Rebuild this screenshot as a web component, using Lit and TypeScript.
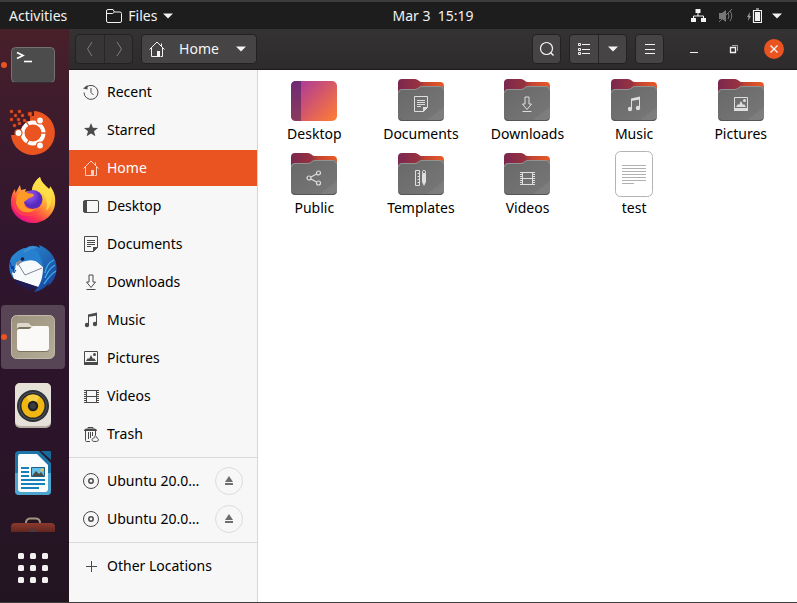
import { LitElement, html, svg, css } from "lit";
import { customElement, property } from "lit/decorators.js";
import { classMap } from "lit/directives/class-map.js";

/* Symbolic 16x16 glyphs, drawn in the current text colour */
const glyphs: Record<string, unknown> = {
  recent: svg`<g fill="none" stroke="currentColor"><path d="M3.2 3.3A7 7 0 1 1 1 8.5" /><path d="M8 4v4.500l2.500 2.500" /></g><path d="M0 4.500 4.500 1v4.500z" fill="currentColor" />`,
  star: svg`<path fill="currentColor" d="m8 1 1.900 4.800 5.100.3-4 3.200 1.400 5L8 11.500l-4.400 2.800 1.400-5-4-3.200 5.100-.3z" />`,
  home: svg`<path fill="none" stroke="currentColor" d="M.5 8.500 8 1l7.500 7.500M2.500 7v8.500h5.500M13.500 7v8.500h-2M12.500 5V2.500" /><path fill="currentColor" d="M8 10h3v6H8z" />`,
  desktop: svg`<rect x=".5" y="2.500" width="15" height="12" rx="1.500" fill="none" stroke="currentColor" /><path fill="currentColor" d="M1 3h3v11H1z" />`,
  documents: svg`<path fill="none" stroke="currentColor" d="M1.500.5h13v11l-4 4h-9z" /><path stroke="currentColor" d="M4 4.500h8M4 6.500h8M4 8.500h8M4 10.500h4" /><path fill="currentColor" d="M10 16v-5h5z" />`,
  downloads: svg`<path fill="none" stroke="currentColor" d="M6 1h4v7h2.500L8 13.500 3.500 8H6zM3.500 15.500h9" />`,
  music: svg`<path fill="none" stroke="currentColor" d="M5.500 13V3.500l8-1.500v9.500" /><path fill="currentColor" d="M5 2.500 14 .5v3L5 5z" /><circle cx="4" cy="13" r="2.200" fill="currentColor" /><circle cx="12" cy="12" r="2.200" fill="currentColor" />`,
  pictures: svg`<path fill="none" stroke="currentColor" d="M1.500 1.500h13v12h-13z" /><path fill="currentColor" d="M1 12h14v3H1zM3 11l2-3 1 1 2-4 2 4 1-1 2 3z" /><circle cx="11.500" cy="4.500" r="1.500" fill="currentColor" />`,
  videos: svg`<path fill="none" stroke="currentColor" d="M3.500 2.500h10v12h-10zM3 8.500h11M1 2.500h15M1 14.500h15" /><path stroke="currentColor" stroke-width="2" stroke-dasharray="1 1" d="M2 2v13M15 2v13" />`,
  trash: svg`<path fill="none" stroke="currentColor" d="M2.500 5v9.500q0 1 1 1H7M12.500 5v4M5.500 6v7M7.500 6v6M9.500 6v4M5 2.500v-1h5v1" /><path fill="currentColor" d="M1 5q0-2.500 3-2.500h7q3 0 3 2.500z" /><path fill="none" stroke="currentColor" d="M12 9.500c-1 1 .5 1.500-.5 2.300-1.500.2-2.500.8-2.500 2s1 1.700 3 1.700 3.500-.5 3.500-1.700-1-1.500-1.700-1.800c.3-1-.6-1.900-1.800-2.500z" />`,
  disc: svg`<g fill="none" stroke="currentColor"><circle cx="8" cy="8" r="7.500" /><circle cx="8" cy="8" r="2.200" stroke-width="1.500" /></g>`,
  plus: svg`<path stroke="currentColor" d="M8.500 3v11M3 8.500h11" />`,
  eject: svg`<path fill="currentColor" d="m8 3 4 6H4zM4 10h8v2H4z" />`,
  share: svg`<g fill="none" stroke="currentColor" stroke-width="1.200"><circle cx="3" cy="8" r="2" /><circle cx="12.500" cy="3" r="2" /><circle cx="12.500" cy="13" r="2" /><path d="m5 7 5.500-3M5 9l5.500 3" /></g>`,
  templates: svg`<path fill="none" stroke="currentColor" d="M2.500.5h4v15h-4zM4.500 3.500h2M4.500 6.500h2M4.500 9.500h2M4.500 12.500h2" /><path fill="currentColor" d="M9 4h4v8l-2 4-2-4z" /><path fill="none" stroke="currentColor" d="M9.500 3.500v-2q0-1 1.500-1t1.500 1v2z" />`,
  folder: svg`<path fill="none" stroke="currentColor" d="M.5 13V3q0-1.500 1.500-1.500h5L8.500 4h5.500q1.500 0 1.500 1.500V13q0 1.500-1.500 1.500H2Q.5 14.500.5 13zM.5 5.500h6L8.500 4" />`,
  caret: svg`<path fill="currentColor" d="M3 5.500h10l-5 5z" />`,
  back: svg`<path fill="none" stroke="currentColor" d="m10 1-4.500 7 4.500 7" />`,
  forward: svg`<path fill="none" stroke="currentColor" d="m6 1 4.500 7L6 15" />`,
  search: svg`<circle cx="7.500" cy="7.500" r="6" fill="none" stroke="currentColor" stroke-width="1.200" /><path stroke="currentColor" stroke-width="1.400" d="m11.500 11.500 3 3" />`,
  list: svg`<path stroke="currentColor" d="M6 3.500h8M6 8.500h8M6 12.500h8" /><path fill="none" stroke="currentColor" d="M2.500 2.500h2v2h-2zM2.500 7.500h2v2h-2zM2.500 11.500h2v2h-2z" />`,
  menu: svg`<path stroke="currentColor" d="M3 3.500h10M3 8.500h10M3 12.500h10" />`,
  minimise: svg`<path stroke="currentColor" d="M4 11.500h8" />`,
  restore: svg`<path fill="none" stroke="currentColor" stroke-width="1.300" d="M4.500 6.500h5v5h-5z" /><path fill="none" stroke="currentColor" opacity=".6" d="M6 4.500h5.500V10" />`,
  close: svg`<path stroke="currentColor" stroke-width="1.400" d="m4.500 4.500 7 7m0-7-7 7" />`,
  network: svg`<path fill="currentColor" d="M5.500 1h5v4h-5zM1 10h5v4H1zM11 10h5v4h-5z" /><path fill="none" stroke="currentColor" d="M8 5v3M3.500 10V8h10v2" />`,
  muted: svg`<path fill="currentColor" d="M1 5h3l4-3v12l-4-3H1z" /><path fill="none" stroke="currentColor" d="M10 5q2 3 0 6M12 3q3.500 5 0 10M1 14 14 1" />`,
  battery: svg`<path fill="currentColor" opacity=".6" d="M4 4 1 9h1.500L2 13l3-5H3.500z" /><path fill="none" stroke="currentColor" stroke-width="1.200" d="M7.500 2.500h8v12h-8zM10 1h3" /><path fill="currentColor" d="M9 4h5v9H9z" />`,
};

@customElement("sym-icon")
class SymIcon extends LitElement {
  @property() name = "";
  static styles = css`
    :host { display: block; flex: none; width: 16px; height: 16px; }
    svg { display: block; }
  `;
  render() {
    return html`<svg width="16" height="16" viewBox="0 0 16 16" aria-hidden="true">${glyphs[this.name]}</svg>`;
  }
}

/* Full-colour 48x48 file icons */
@customElement("file-icon")
class FileIcon extends LitElement {
  @property() kind = "";
  static styles = css`
    :host { display: block; width: 48px; height: 48px; }
    svg { display: block; }
    .emblem { color: #dedede; }
  `;
  private desktop() {
    return svg`
      <defs><linearGradient id="d" x2="1" y2=".8"><stop offset=".1" stop-color="#a93c9a" /><stop offset=".5" stop-color="#cf5370" /><stop offset="1" stop-color="#f9783c" /></linearGradient>
      <linearGradient id="s" x2="0" y2="1"><stop stop-color="#6f2a74" /><stop offset="1" stop-color="#8a3c5c" /></linearGradient></defs>
      <rect x="1" y="5" width="46" height="40" rx="5" fill="url(#d)" />
      <path d="M11 5H6q-5 0-5 5v30q0 5 5 5h5z" fill="url(#s)" />`;
  }
  private page() {
    return svg`
      <rect x="5.500" y="1.500" width="37" height="45" rx="5" fill="#fff" stroke="#b4b4b4" />
      <path stroke="#b0b0b0" d="M12 15.500h24M12 18.500h24M12 21.500h24M12 24.500h24M12 27.500h24M12 30.500h24M12 33.500h12" />`;
  }
  private folder() {
    return svg`
      <defs><linearGradient id="b" x2="1"><stop stop-color="#7a2750" /><stop offset=".45" stop-color="#97323f" /><stop offset=".6" stop-color="#c34432" /><stop offset="1" stop-color="#ec5a25" /></linearGradient>
      <linearGradient id="f" x2="1" y2="1"><stop stop-color="#686868" /><stop offset=".8" stop-color="#757575" /><stop offset=".8" stop-color="#7c7c7c" /><stop offset="1" stop-color="#808080" /></linearGradient></defs>
      <path fill="url(#b)" d="M1 20V7q0-4 4-4h13q2 0 3.500 1.500T25 6h18q4 0 4 4v10z" />
      <path fill="url(#f)" d="M1 17q0-4 4-4h13q2 0 3.500-1.500T25 10h18q4 0 4 4v27q0 4-4 4H5q-4 0-4-4z" />
      <path fill="none" stroke="#929292" d="M1.500 17q0-3.500 3.500-3.500h13q2 0 3.500-1.500T25 10.500h18q3.500 0 3.500 3.500" />
      <path fill="none" stroke="#555" d="M2 42.500q1 2 3 2h38q2 0 3-2" />
      <g class="emblem" transform="translate(16 20)">${glyphs[this.kind]}</g>`;
  }
  render() {
    const art = this.kind === "desktop" ? this.desktop() : this.kind === "text" ? this.page() : this.folder();
    return html`<svg width="48" height="48" viewBox="0 0 48 48" aria-hidden="true">${art}</svg>`;
  }
}

/* Launcher artwork, 48x48 */
const apps: Record<string, unknown> = {
  Terminal: svg`
    <rect x="2.500" y="6.500" width="43" height="35" rx="4" fill="#4b4c4b" stroke="#737373" />
    <path d="M4 41.500h40" stroke="#333" />
    <path d="m8 11.500 6 3-6 3" fill="none" stroke="#fff" stroke-width="1.700" /><path d="M15 20.500h8" stroke="#fff" stroke-width="1.600" />`,
  "Install Ubuntu": svg`
    <path fill="#e95420" d="M25 2a22 22 0 1 1-23 24h6v-4h5v-5h5v-5h3V7h4z" />
    <g fill="#e95420" stroke="#8e2a12" stroke-width=".6"><path d="M1 1h3v3H1zM9 1h3v3H9zM5 5h3v3H5zM12 5h3v3h-3zM1 9h3v3H1zM8 9h3v3H8zM19 3h4v4h-4zM4 15h3v3H4zM9 13h3v3H9zM14 10h3v3h-3z" /></g>
    <circle cx="24" cy="24" r="10.500" fill="none" stroke="#fff" stroke-width="4" />
    <path stroke="#e95420" stroke-width="1.400" d="M24 24H38M24 24 17 12M24 24 17 36" />
    <circle cx="24" cy="24" r="8" fill="#e95420" />
    <g fill="#fff" stroke="#e95420" stroke-width="1.200"><circle cx="9.500" cy="24" r="3.500" /><circle cx="31" cy="11.500" r="3.500" /><circle cx="31" cy="36.500" r="3.500" /></g>`,
  Firefox: svg`
    <defs><linearGradient id="ff" x1=".8" y1=".1" x2=".25" y2=".95"><stop stop-color="#fff04d" /><stop offset=".35" stop-color="#ffbd3a" /><stop offset=".6" stop-color="#ff7139" /><stop offset=".8" stop-color="#ff3152" /><stop offset="1" stop-color="#e3128b" /></linearGradient>
    <radialGradient id="fg" cx=".35" cy=".3"><stop stop-color="#a44cf0" /><stop offset=".6" stop-color="#7542d8" /><stop offset="1" stop-color="#592abf" /></radialGradient></defs>
    <path fill="url(#ff)" d="M31 0c1 5 5 8 9 12 1-1 1-2 1-3 4 5 6 11 5 18-1 11-11 19-22 19S3 38 2 28c-.5-6 1-12 4-16l.5 4L11 8l1 5 5-1-1 3c2-1 4-1 7-1 0-6 4-11 8-14z" />
    <path fill="#ffe14a" d="M31 0c1 5 5 8 9 12 4 6 3 17-3 22 2-7 1-13-3-17-3-2-6-3-11-3 0-6 4-11 8-14z" opacity=".8" />
    <circle cx="24" cy="22.500" r="9.500" fill="url(#fg)" />
    <path fill="#ff9b25" d="M8 18c4-4 8-4 11-2 2 1 5 0 6 2-1 3-5 2-6 4l-4 3c0 6 6 9 12 6-6 8-19 5-20-6z" />
    <path fill="#ff4a48" opacity=".65" d="M5 20c1 14 13 22 27 13-6 9-25 9-28-5z" />`,
  Thunderbird: svg`
    <defs><linearGradient id="tb" x2="1" y2="1"><stop stop-color="#2e91dd" /><stop offset=".5" stop-color="#216bb8" /><stop offset="1" stop-color="#173c99" /></linearGradient></defs>
    <path fill="url(#tb)" d="M17 3c4-3 10-3 14 0l-1-3c8 3 13 8 16 15 4 10 0 21-7 26l1-3c-4 5-9 8-15 9l4-5-24-8C0 29-1 20 2 13c3-5 8-8 13-10z" />
    <path fill="#f8f9fb" d="M7 18c4-4 14-5 20-2l7 6c0 7-1 14-5 20L5 34l-2-6 3-3z" />
    <path fill="#1f1b52" d="m5 34 24 8-4 3-2-2-2 3-4-4-2 2-2-4-3 1z" />
    <path fill="none" stroke="#7d8699" d="M8 17 16 30l17-7" />
    <path fill="#2780cf" d="M8 19C7 9 15 3 23 3c7 3 9 9 11 19-4-6-10-8-17-6-3 1-6 1-9 3z" />
    <path fill="#3d8fd4" d="M14 8c3-6 10-8 14-5-5 0-9 3-14 5z" />
    <circle cx="13.500" cy="14" r="1.800" fill="#1d1b33" /><path fill="#8b8f96" d="m7 18 4-3 2 2-5 4z" />
    <path fill="none" stroke="#3db0e6" stroke-width="1.300" d="M45 15c-5 2-8 7-9 13M46 20c-5 3-8 8-10 13M47 26c-5 3-8 7-12 13" />
    <path fill="none" stroke="#14359b" d="m1 17 2 7 1-3 1 7 2-3" />`,
  Files: svg`
    <defs><linearGradient id="fb" x2="1" y2="1"><stop stop-color="#9c927d" /><stop offset="1" stop-color="#b4ac98" /></linearGradient></defs>
    <rect x="2.500" y="2.500" width="43" height="43" rx="5" fill="url(#fb)" stroke="#c0b9a8" />
    <path fill="#ded9cc" d="M8 18v-6q0-2 2-2h9q1 0 2 1.500t3 1.500v5z" />
    <rect x="8" y="14" width="32" height="25" rx="3" fill="#7b725f" />
    <path fill="#faf9f7" d="M8 18q0-2 2-2h9q2 0 3-1.500t3-1.500h13q2 0 2 2v20q0 3-3 3H11q-3 0-3-3z" />`,
  Rhythmbox: svg`
    <rect x="6" y="2" width="36" height="45" rx="5" fill="#b3ada4" /><rect x="6" y="2" width="36" height="43" rx="5" fill="#e5e0d8" />
    <circle cx="24" cy="25" r="16" fill="#2d3138" /><circle cx="24" cy="25" r="14" fill="#4f535a" /><circle cx="24" cy="25" r="13" fill="#25272b" />
    <circle cx="24" cy="25" r="11.500" fill="#f0b713" /><path fill="#f7cf45" d="M24 25 17 16a11.500 11.500 0 0 1 14 0z" />
    <circle cx="24" cy="25" r="5.200" fill="#202225" /><circle cx="24" cy="25" r="3" fill="#3b3d40" />`,
  "LibreOffice Writer": svg`
    <path fill="#1b75a7" d="M10 2h20l12 12v28q0 4-4 4H10q-4 0-4-4V6q0-4 4-4z" /><path fill="#4ca6cf" d="M6 24h36v18q0 4-4 4H10q-4 0-4-4z" />
    <path fill="#fbfcfd" d="M11 5h17l11 11v24q0 3-3 3H12q-3 0-3-3V8q0-3 2-3z" /><path fill="#176c9c" d="M32 2h9q1 0 1 1v8z" />
    <path stroke="#1680bb" stroke-width="2" d="M12 19h8M12 23h8M12 27h8M12 31h24M12 35h24M12 39h18" />
    <path fill="#65bfe8" stroke="#1a5f8a" d="M22.500 18.500h13v9h-13z" /><path fill="#4e4b45" d="m23 27 4-5 3 3 2-2 3 4z" /><circle cx="33" cy="21" r="1.500" fill="#f2c233" />`,
  "Ubuntu Software": svg`
    <defs><linearGradient id="us" x2="0" y2="1"><stop stop-color="#8d3a2d" /><stop offset=".25" stop-color="#5b241f" /><stop offset="1" stop-color="#3a1716" /></linearGradient></defs>
    <path d="M17 8V6q0-4 4-4.500h6q4 .5 4 4.500v2" fill="none" stroke="#a39382" stroke-width="2" />
    <rect x="2" y="6" width="44" height="40" rx="4" fill="url(#us)" /><path fill="#4c3841" d="M21 12h6v4h-7z" />`,
};

@customElement("dock-icon")
class DockIcon extends LitElement {
  @property() app = "";
  static styles = css`
    :host { display: block; width: 48px; height: 48px; }
    svg { display: block; }
  `;
  render() {
    return html`<svg width="48" height="48" viewBox="0 0 48 48" aria-hidden="true">${apps[this.app]}</svg>`;
  }
}

const reset = css`
  :host, * { box-sizing: border-box; }
  ul { list-style: none; margin: 0; padding: 0; }
  button { font: inherit; color: inherit; background: none; border: 0; padding: 0; margin: 0; }
`;

@customElement("top-panel")
class TopPanel extends LitElement {
  static styles = [reset, css`
    :host {
      display: grid; grid-template-columns: 1fr auto 1fr; align-items: center;
      height: 29px; border-top: 2px solid #3c3c3c; background: #1d1d1d; color: #f2f2f2; padding: 0 12px 0 9px;
    }
    .left, .app, .status, .icons { display: flex; align-items: center; }
    .left { gap: 39px; }
    .app { gap: 6px; }
    .app sym-icon:last-child { margin-left: -3px; }
    .clock { padding-left: 72px; white-space: pre; }
    .status { justify-self: end; gap: 7px; }
    .icons { gap: 12px; }
    .dim { color: #777; }
  `];
  render() {
    return html`
      <div class="left">
        <button>Activities</button>
        <button class="app"><sym-icon name="folder"></sym-icon>Files<sym-icon name="caret"></sym-icon></button>
      </div>
      <button class="clock">Mar 3  15:19</button>
      <button class="status" aria-label="System menu">
        <span class="icons">
          <sym-icon name="network"></sym-icon><sym-icon class="dim" name="muted"></sym-icon><sym-icon name="battery"></sym-icon>
        </span>
        <sym-icon name="caret"></sym-icon>
      </button>`;
  }
}

@customElement("app-dock")
class AppDock extends LitElement {
  static styles = [reset, css`
    :host {
      display: flex; flex-direction: column; min-height: 0;
      background: linear-gradient(#48202a, #3a1a2d 20%, #2f162e 38%, #2b142a 70%, #221520);
    }
    .apps { flex: 1; min-height: 0; overflow: hidden; display: flex; flex-direction: column; gap: 4px; padding: 4px 4px 0 1px; }
    .item { position: relative; flex: none; display: grid; place-items: center; width: 64px; height: 64px; border-radius: 4px; }
    .active { background: #574454; }
    .running::before {
      content: ""; position: absolute; left: 0; top: 29px; width: 6px; height: 6px; border-radius: 50%; background: #e95420;
    }
    .grid { display: grid; place-items: center; height: 70px; padding: 2px 3px 0 0; }
    .grid svg { display: block; }
  `];
  render() {
    return html`
      <ul class="apps">
        ${Object.keys(apps).map((name) => html`
          <li><button aria-label=${name} class=${classMap({
            item: true, active: name === "Files", running: name === "Files" || name === "Terminal",
          })}><dock-icon app=${name}></dock-icon></button></li>`)}
      </ul>
      <button class="grid" aria-label="Show Applications">
        <svg width="32" height="32" viewBox="0 0 32 32" fill="#f3f1ef">
          ${[1, 13, 25].map((y) => [1, 13, 25].map((x) => svg`<rect x=${x} y=${y} width="6" height="6" rx="1.500" />`))}
        </svg>
      </button>`;
  }
}

@customElement("header-bar")
class HeaderBar extends LitElement {
  static styles = [reset, css`
    :host {
      display: flex; align-items: center; gap: 8px; height: 41px; padding: 0 13px 0 6px;
      background: linear-gradient(#353233, #2e2b2c); border-bottom: 1px solid #1c1a1b; color: #f4f4f4;
    }
    .group { display: flex; border: 1px solid #232122; border-radius: 4px; background: #464444; }
    .group button { display: grid; place-items: center; width: 28px; height: 28px; }
    .group button:only-child { width: 27px; }
    .group button + button { border-left: 1px solid #282627; }
    .nav { background: #383536; color: #7f7d7d; }
    .group .path:only-child { display: flex; align-items: center; justify-content: space-between; width: 114px; padding: 0 7px; }
    .window { display: flex; gap: 20px; margin-left: 12px; }
    .window button { display: grid; place-items: center; width: 20px; height: 20px; border-radius: 50%; }
    .window .close { background: #e95420; }
    .space { flex: 1; }
  `];
  render() {
    const b = (label: string, icon: string, cls = "") =>
      html`<button class=${cls} aria-label=${label}><sym-icon name=${icon}></sym-icon></button>`;
    return html`
      <div class="group nav">${b("Back", "back")}${b("Forward", "forward")}</div>
      <div class="group"><button class="path"><sym-icon name="home"></sym-icon><span>Home</span><sym-icon name="caret"></sym-icon></button></div>
      <div class="space"></div>
      <div class="group">${b("Search", "search")}</div>
      <div class="group">${b("List view", "list")}${b("View options", "caret")}</div>
      <div class="group">${b("Menu", "menu")}</div>
      <div class="window">${b("Minimise", "minimise")}${b("Restore", "restore")}${b("Close", "close", "close")}</div>`;
  }
}

type Place = { icon: string; label: string; selected?: boolean; eject?: boolean };
const places: Place[][] = [
  [
    { icon: "recent", label: "Recent" },
    { icon: "star", label: "Starred" },
    { icon: "home", label: "Home", selected: true },
    { icon: "desktop", label: "Desktop" },
    { icon: "documents", label: "Documents" },
    { icon: "downloads", label: "Downloads" },
    { icon: "music", label: "Music" },
    { icon: "pictures", label: "Pictures" },
    { icon: "videos", label: "Videos" },
    { icon: "trash", label: "Trash" },
  ],
  [
    { icon: "disc", label: "Ubuntu 20.0…", eject: true },
    { icon: "disc", label: "Ubuntu 20.0…", eject: true },
  ],
  [{ icon: "plus", label: "Other Locations" }],
];

@customElement("places-sidebar")
class PlacesSidebar extends LitElement {
  static styles = [reset, css`
    :host { display: block; overflow: hidden; background: #f7f7f7; border-right: 1px solid #d6d6d6; color: #000; }
    ul { display: flex; flex-direction: column; gap: 2px; padding: 5px 0; }
    ul:first-of-type { padding-top: 4px; }
    ul + ul { border-top: 1px solid #dadada; }
    li { display: flex; align-items: center; height: 36px; padding-right: 14px; }
    a { flex: 1; display: flex; align-items: center; gap: 8px; padding-left: 14px; color: inherit; text-decoration: none; white-space: nowrap; }
    a sym-icon { color: #4a4a4a; }
    .selected { background: #e95420; color: #fff; }
    .selected sym-icon { color: #fbd0c0; }
    .eject { display: grid; place-items: center; width: 28px; height: 28px; border: 1px solid #dcdcdc; border-radius: 50%; color: #6e6e6e; }
  `];
  render() {
    return html`<nav>${places.map((group) => html`
      <ul>${group.map((p) => html`
        <li class=${classMap({ selected: !!p.selected })}>
          <a href="#"><sym-icon name=${p.icon}></sym-icon>${p.label}</a>
          ${p.eject ? html`<button class="eject" aria-label="Eject"><sym-icon name="eject"></sym-icon></button>` : ""}
        </li>`)}
      </ul>`)}</nav>`;
  }
}

const files = [
  ["desktop", "Desktop"], ["documents", "Documents"], ["downloads", "Downloads"], ["music", "Music"], ["pictures", "Pictures"],
  ["share", "Public"], ["templates", "Templates"], ["videos", "Videos"], ["text", "test"],
];

@customElement("file-grid")
class FileGrid extends LitElement {
  static styles = [reset, css`
    :host { display: block; overflow: hidden; background: #fff; color: #000; padding: 6px 3px; }
    ul { display: grid; grid-template-columns: repeat(auto-fill, minmax(100px, 1fr)); gap: 6px 0; }
    button { display: flex; flex-direction: column; align-items: center; width: 100%; line-height: 20px; }
  `];
  render() {
    return html`<ul>${files.map(([kind, label]) => html`
      <li><button><file-icon kind=${kind}></file-icon>${label}</button></li>`)}</ul>`;
  }
}

@customElement("app-root")
class AppRoot extends LitElement {
  static styles = [reset, css`
    :host {
      display: grid; grid-template: auto minmax(0, 1fr) / 69px minmax(0, 1fr); height: 100vh;
      border-bottom: 1px solid #3c3c3c; background: #fff; font: 14px/20px "Noto Sans", "Open Sans", sans-serif;
    }
    top-panel { grid-column: 1 / -1; }
    .window { display: grid; grid-template: auto minmax(0, 1fr) / 189px minmax(0, 1fr); min-height: 0; }
    header-bar { grid-column: 1 / -1; }
  `];
  render() {
    return html`
      <top-panel></top-panel>
      <app-dock></app-dock>
      <main class="window">
        <header-bar></header-bar>
        <places-sidebar></places-sidebar>
        <file-grid></file-grid>
      </main>`;
  }
}
